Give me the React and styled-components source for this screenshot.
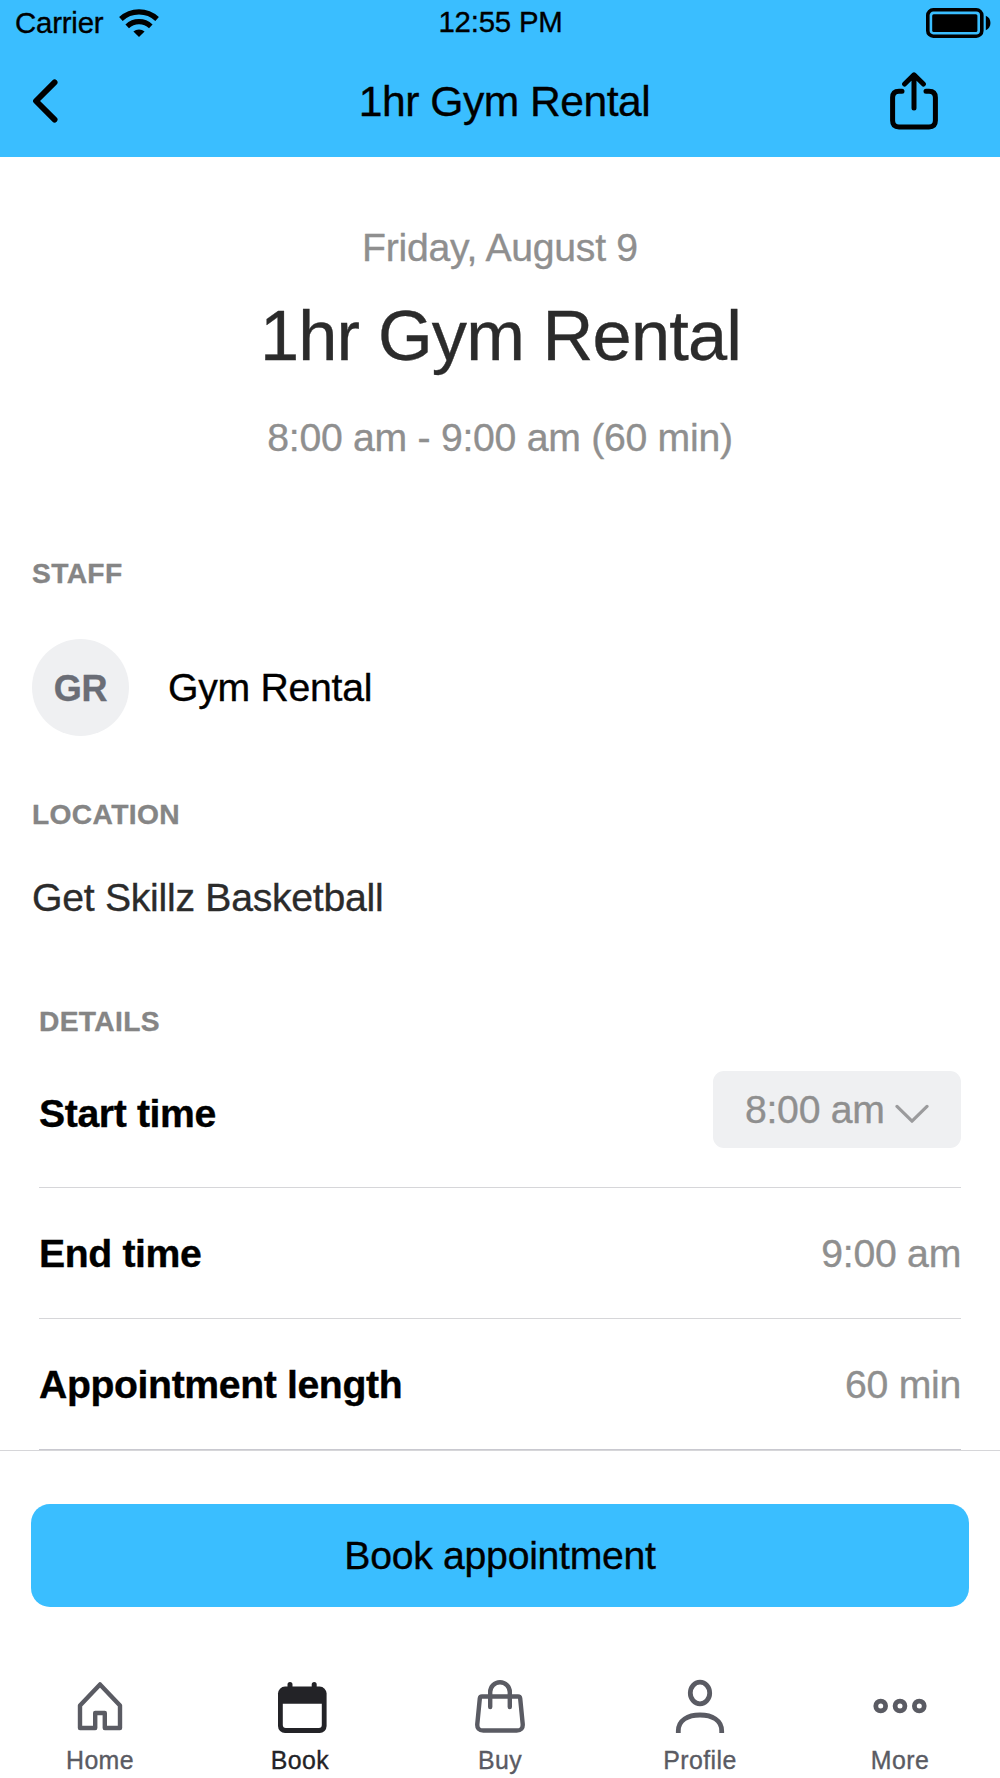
import React from "react";
import styled, { createGlobalStyle } from "styled-components";

const BLUE = "#3abeff";
const GREY = "#8f8f8f";
const NAV = "#5a5b63";
const NAV_ACTIVE = "#232327";

const GlobalStyle = createGlobalStyle`
  * { box-sizing: border-box; }
  body {
    margin: 0;
    background: #fff;
    font-family: "Liberation Sans", Arial, Helvetica, sans-serif;
    font-size: 39.2px;
    letter-spacing: -0.28px;
    line-height: 48px;
    color: #000;
    -webkit-text-stroke: 0.35px currentColor;
  }
  h1, h2, p { margin: 0; font-weight: 400; }
  button { font: inherit; letter-spacing: inherit; color: inherit; border: 0; padding: 0; background: none; }
  svg { display: block; flex: none; }
`;

const Screen = styled.div`
  width: 1000px;
  height: 1778px;
  display: flex;
  flex-direction: column;
  overflow: hidden;
`;

const Top = styled.header`
  height: 157px;
  background: ${BLUE};
`;

const StatusBar = styled.div`
  height: 44px;
  padding: 0 9px 0 15px;
  display: grid;
  grid-template-columns: 1fr auto 1fr;
  align-items: center;
  font-size: 29.4px;
  letter-spacing: -0.2px;
  line-height: 34px;
`;

const Carrier = styled.div`
  display: flex;
  align-items: center;
  gap: 16px;
  padding-top: 2px;
`;

const Clock = styled.div`
  padding-right: 5px;
`;

const BatterySlot = styled.div`
  justify-self: end;
  padding-top: 2px;
`;

const NavBar = styled.div`
  height: 113px;
  padding: 0 23px 0 32px;
  display: grid;
  grid-template-columns: 1fr auto 1fr;
  align-items: center;
`;

const NavTitle = styled.h2`
  font-size: 42.6px;
  letter-spacing: -0.5px;
`;

const ShareButton = styled.button`
  justify-self: end;
  margin-right: 39px;
`;

const Content = styled.main`
  height: 1293px;
  display: flex;
  flex-direction: column;
`;

const Hero = styled.section`
  padding-top: 67px;
  display: flex;
  flex-direction: column;
  align-items: center;
`;

const Muted = styled.p`
  color: ${GREY};
`;

const HeroTitle = styled.h1`
  margin: 22px 0 36px;
  padding-left: 1px;
  font-size: 70.4px;
  letter-spacing: -0.85px;
  line-height: 84px;
  color: #2b2b2b;
`;

const Section = styled.section`
  padding: ${(p) => p.$top}px 39px 0 ${(p) => p.$left}px;
`;

const SectionLabel = styled.h2`
  font-size: 28.2px;
  line-height: 34px;
  font-weight: 700;
  letter-spacing: 0.35px;
  color: #858585;
`;

const StaffRow = styled.div`
  margin-top: 49px;
  display: flex;
  align-items: center;
  gap: 39px;
`;

const Avatar = styled.div`
  width: 97px;
  height: 97px;
  padding-top: 2px;
  border-radius: 50%;
  background: #eff0f2;
  color: #6a6d76;
  font-size: 36px;
  font-weight: 700;
  display: flex;
  align-items: center;
  justify-content: center;
`;

const Place = styled.p`
  margin-top: 43px;
  color: #2b2b2b;
`;

const DetailRow = styled.div`
  height: 131px;
  padding-top: 2px;
  display: flex;
  align-items: center;
  justify-content: space-between;
  border-bottom: 1px solid ${(p) => (p.$last ? "#c9c9d0" : "#d6d6d9")};
`;

const StartRow = styled(DetailRow)`
  height: 150px;
  padding: 33px 0 39px;
`;

const DetailLabel = styled.span`
  font-weight: 700;
  letter-spacing: -0.38px;
  padding-top: ${(p) => p.$drop || 0}px;
`;

const TimeSelect = styled.button`
  width: 248px;
  height: 77px;
  padding-left: 32px;
  display: flex;
  align-items: center;
  gap: 10px;
  border-radius: 11px;
  background: #eff0f2;
  color: ${GREY};
  svg { margin-top: 8px; }
`;

const Footer = styled.footer`
  height: 328px;
  border-top: 1px solid #d6d6d9;
  padding-top: 53px;
  background: #fff;
`;

const BookButton = styled.button`
  display: block;
  width: 938px;
  height: 103px;
  margin: 0 31px;
  border-radius: 19px;
  background: ${BLUE};
`;

const Tabs = styled.nav`
  margin-top: 69px;
  display: grid;
  grid-template-columns: repeat(5, 200px);
`;

const Tab = styled.div`
  display: flex;
  flex-direction: column;
  align-items: center;
  gap: 10px;
  font-size: 24.9px;
  line-height: 28px;
  letter-spacing: 0.4px;
  color: ${(p) => (p.$active ? NAV_ACTIVE : NAV)};
`;

const stroke = {
  fill: "none",
  stroke: "currentColor",
  strokeWidth: 4.4,
  strokeLinejoin: "round",
  strokeLinecap: "round",
};

const WifiIcon = () => (
  <svg width="40" height="28" viewBox="0 0 40 28" fill="none" stroke="#000">
    <path d="M1.9 10 A26.5 26.5 0 0 1 38.1 10" strokeWidth="5.2" />
    <path d="M8.2 17.4 A17.2 17.2 0 0 1 31.8 17.4" strokeWidth="5.2" />
    <path d="M14.4 22.6 a8.6 8.6 0 0 1 11.2 0 L20 28 Z" fill="#000" stroke="none" />
  </svg>
);

const BatteryIcon = () => (
  <svg width="65" height="30" viewBox="0 0 65 30">
    <rect x="1.8" y="1.8" width="54" height="26.4" rx="5.5" fill="none" stroke="#000" strokeWidth="3.6" />
    <rect x="6.2" y="6.2" width="45.2" height="17.8" rx="1.5" />
    <path d="M59.8 7.8 C66 10 66 20 59.8 22.2 Z" />
  </svg>
);

const BackIcon = () => (
  <svg width="26" height="44" viewBox="0 0 26 44" {...stroke} strokeWidth={5.8}>
    <path d="M22.6 3.4 L4 22 L22.6 40.6" />
  </svg>
);

const ShareIcon = () => (
  <svg width="48" height="58" viewBox="0 0 48 58" {...stroke} strokeWidth={5}>
    <path d="M12 19.2 H9 Q2.6 19.2 2.6 25.6 V48.6 Q2.6 55 9 55 H39 Q45.4 55 45.4 48.6 V25.6 Q45.4 19.2 39 19.2 H36" />
    <path d="M24 36 V3 M14.6 12 L24 2.8 L33.4 12" />
  </svg>
);

const ChevronIcon = () => (
  <svg width="34" height="20" viewBox="0 0 34 20" {...stroke} stroke="#9b9b9d" strokeWidth={3.2}>
    <path d="M2 2.4 L17 17.2 L32 2.4" />
  </svg>
);

const HomeIcon = () => (
  <svg width="60" height="60" viewBox="0 0 60 60" {...stroke}>
    <path d="M30 8.4 L50 29.6 V52 H34.8 V37 H25.2 V52 H10 V29.6 Z" />
  </svg>
);

const CalendarIcon = () => (
  <svg width="60" height="60" viewBox="-2.3 0 60 60">
    <path d="M17.7 8.5 V14 M41.9 8.5 V14" {...stroke} strokeWidth={5} />
    <rect x="5.7" y="10.6" width="48.6" height="46.4" rx="7" fill="currentColor" />
    <path d="M10.5 27.7 H49.5 V49 Q49.5 52 46.5 52 H13.5 Q10.5 52 10.5 49 Z" fill="#fff" />
  </svg>
);

const BagIcon = () => (
  <svg width="60" height="60" viewBox="0 0 60 60" {...stroke}>
    <path d="M12 20.5 H48 Q50 20.5 50.2 22.5 L52.7 48 Q53.2 54.5 46.7 54.5 H13.3 Q6.8 54.5 7.3 48 L9.8 22.5 Q10 20.5 12 20.5 Z" />
    <path d="M20.2 31 V16 A9.8 9.8 0 0 1 39.8 16 V31" />
  </svg>
);

const ProfileIcon = () => (
  <svg width="60" height="60" viewBox="0 0 60 60" {...stroke} strokeLinecap="butt" strokeWidth={4.8}>
    <ellipse cx="30" cy="17" rx="9.7" ry="10.8" />
    <path d="M8.3 57 V55 C8.3 44 18 39 30 39 S51.7 44 51.7 55 V57" />
  </svg>
);

const MoreIcon = () => (
  <svg width="60" height="60" viewBox="0 0 60 60" {...stroke} strokeWidth={4.8}>
    <circle cx="10.7" cy="30" r="4.9" />
    <circle cx="30" cy="30" r="4.9" />
    <circle cx="49.3" cy="30" r="4.9" />
  </svg>
);

const tabs = [
  { label: "Home", Icon: HomeIcon },
  { label: "Book", Icon: CalendarIcon, active: true },
  { label: "Buy", Icon: BagIcon },
  { label: "Profile", Icon: ProfileIcon },
  { label: "More", Icon: MoreIcon },
];

export default function App() {
  return (
    <Screen>
      <GlobalStyle />
      <Top>
        <StatusBar>
          <Carrier>
            Carrier
            <WifiIcon />
          </Carrier>
          <Clock>12:55 PM</Clock>
          <BatterySlot>
            <BatteryIcon />
          </BatterySlot>
        </StatusBar>
        <NavBar>
          <button aria-label="Back">
            <BackIcon />
          </button>
          <NavTitle>1hr Gym Rental</NavTitle>
          <ShareButton aria-label="Share">
            <ShareIcon />
          </ShareButton>
        </NavBar>
      </Top>

      <Content>
        <Hero>
          <Muted>Friday, August 9</Muted>
          <HeroTitle>1hr Gym Rental</HeroTitle>
          <Muted>8:00 am - 9:00 am (60 min)</Muted>
        </Hero>

        <Section $top={94} $left={32}>
          <SectionLabel>STAFF</SectionLabel>
          <StaffRow>
            <Avatar>GR</Avatar>
            <span>Gym Rental</span>
          </StaffRow>
        </Section>

        <Section $top={61} $left={32}>
          <SectionLabel>LOCATION</SectionLabel>
          <Place>Get Skillz Basketball</Place>
        </Section>

        <Section $top={82} $left={39}>
          <SectionLabel>DETAILS</SectionLabel>
          <StartRow>
            <DetailLabel $drop={8}>Start time</DetailLabel>
            <TimeSelect>
              8:00 am
              <ChevronIcon />
            </TimeSelect>
          </StartRow>
          <DetailRow>
            <DetailLabel>End time</DetailLabel>
            <Muted>9:00 am</Muted>
          </DetailRow>
          <DetailRow $last>
            <DetailLabel>Appointment length</DetailLabel>
            <Muted>60 min</Muted>
          </DetailRow>
        </Section>
      </Content>

      <Footer>
        <BookButton>Book appointment</BookButton>
        <Tabs>
          {tabs.map(({ label, Icon, active }) => (
            <Tab key={label} $active={active}>
              <Icon />
              {label}
            </Tab>
          ))}
        </Tabs>
      </Footer>
    </Screen>
  );
}
